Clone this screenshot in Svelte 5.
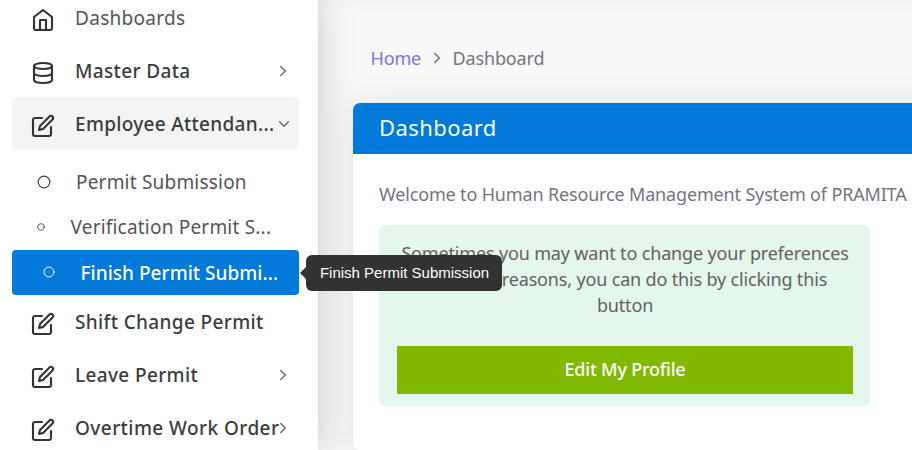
<script>
  const top = [
    { label: 'Dashboards', icon: 'home', light: true },
    { label: 'Master Data', icon: 'database', arrow: 'right' },
    { label: 'Employee Attendan...', icon: 'edit', arrow: 'down', open: true }
  ];
  const sub = [
    { label: 'Permit Submission', kind: 'large' },
    { label: 'Verification Permit S...', kind: 'small' },
    { label: 'Finish Permit Submi...', kind: 'active' }
  ];
  const bottom = [
    { label: 'Shift Change Permit', icon: 'edit' },
    { label: 'Leave Permit', icon: 'edit', arrow: 'right' },
    { label: 'Overtime Work Order', icon: 'edit', arrow: 'right', wide: true }
  ];
</script>

{#snippet row(item)}
  <a class="row" class:open={item.open} class:light={item.light} class:wide={item.wide}>
    <svg class="icon" viewBox="0 0 24 24">
      {#if item.icon === 'home'}
        <path d="M3 9l9-7 9 7v11a2 2 0 0 1-2 2H5a2 2 0 0 1-2-2z" /><path d="M9 22V12h6v10" />
      {:else if item.icon === 'database'}
        <ellipse cx="12" cy="5" rx="9" ry="3" /><path d="M21 12c0 1.66-4 3-9 3s-9-1.34-9-3" /><path d="M3 5v14c0 1.66 4 3 9 3s9-1.34 9-3V5" />
      {:else}
        <path d="M11 4H4a2 2 0 0 0-2 2v14a2 2 0 0 0 2 2h14a2 2 0 0 0 2-2v-7" /><path d="M18.5 2.5a2.121 2.121 0 0 1 3 3L12 15l-4 1 1-4 9.500-9.500z" />
      {/if}
    </svg>
    <span>{item.label}</span>
    {#if item.arrow}
      <svg class="arrow {item.arrow}" viewBox="0 0 24 24"><path d="M9 18l6-6-6-6" /></svg>
    {/if}
  </a>
{/snippet}

<div class="page">
  <nav>
    {#each top as item}{@render row(item)}{/each}
    <div class="submenu">
      {#each sub as item}
        <a class="sub {item.kind}">
          <svg class="dot" viewBox="0 0 24 24"><circle cx="12" cy="12" r="10" /></svg>
          <span>{item.label}</span>
        </a>
      {/each}
    </div>
    {#each bottom as item}{@render row(item)}{/each}
  </nav>

  <main>
    <div class="crumbs">
      <a class="home">Home</a>
      <svg viewBox="0 0 24 24"><path d="M9 18l6-6-6-6" /></svg>
      <span>Dashboard</span>
    </div>
    <section class="card">
      <header>Dashboard</header>
      <div class="body">
        <p class="welcome">Welcome to Human Resource Management System of PRAMITA</p>
        <div class="notice">
          <p>Sometimes you may want to change your preferences<br />for some reasons, you can do this by clicking this<br />button</p>
          <button>Edit My Profile</button>
        </div>
      </div>
    </section>
  </main>

  <div class="tooltip">Finish Permit Submission</div>
</div>

<style>
  :global(body) { overflow: hidden; }
  .page { position: relative; display: flex; width: 912px; height: 450px; overflow: hidden; background: #f8f8f8; font-family: 'Noto Sans', sans-serif; font-size: 18px; color: #76737f; }
  svg { fill: none; stroke: currentColor; stroke-width: 2; stroke-linecap: round; stroke-linejoin: round; flex: none; }
  nav { position: relative; z-index: 1; box-sizing: border-box; width: 318px; height: 450px; flex: none; padding: 0 19px 0 12px; background: #fff; box-shadow: 0 0 36px rgba(15, 25, 22, 0.22); color: #3c3c3c; }
  nav > .row:first-child { margin-top: -9px; }
  .row { box-sizing: border-box; display: flex; align-items: center; height: 53px; padding: 0 7px 0 19px; border-radius: 6px; font-size: 19px; font-weight: 500; letter-spacing: 0.36px; white-space: nowrap; }
  .row span { flex: 1; min-width: 0; line-height: 26px; }
  .row.light { font-weight: 400; color: #555; letter-spacing: 0.3px; }
  .row.wide { letter-spacing: 0.44px; }
  .row.open { background: #f4f4f4; letter-spacing: 0.3px; }
  .icon { width: 24px; height: 24px; margin: 5px 20px 0 0; stroke-width: 2.1; overflow: visible; color: #333; }
  .arrow { width: 18px; height: 18px; color: #6e6b7b; }
  .arrow.down { transform: translateX(1px) rotate(90deg); }
  .submenu { padding-top: 10px; }
  .sub { box-sizing: border-box; display: flex; align-items: center; height: 45px; border-radius: 4px; font-size: 19px; letter-spacing: 0.2px; white-space: nowrap; color: #555; }
  .sub .dot { color: #404040; }
  .large { padding: 0 0 2px 25px; }
  .large .dot { width: 14px; height: 14px; margin-right: 25px; overflow: visible; }
  .small { padding: 0 0 2px 25px; }
  .small .dot { width: 8px; height: 8px; margin-right: 25.500px; stroke-width: 2.5; overflow: visible; }
  .active { padding-left: 31px; background: #0079d9; color: #fff; font-weight: 500; letter-spacing: 0.03px; }
  .active .dot { width: 12px; height: 12px; margin: 0 25.500px 1px 0; color: #fff; }

  main { flex: none; width: 594px; padding-left: 35px; box-sizing: border-box; box-shadow: inset 0 12px 14px -10px rgba(20, 50, 45, 0.05); letter-spacing: -0.16px; }
  .crumbs { display: flex; align-items: center; height: 26px; padding: 45px 0 0 17.500px; }
  .crumbs .home { color: #7c71ef; }
  .crumbs svg { width: 18px; height: 18px; margin: 0 7px 0 6.500px; stroke-width: 2.2; }
  .card { width: 650px; height: 347px; margin-top: 32px; background: #fff; border-radius: 7px; overflow: hidden; box-shadow: 0 4px 36px rgba(15, 35, 30, 0.1); }
  header { box-sizing: border-box; height: 51px; padding-left: 26px; background: #0079d9; color: #fff; font-size: 22px; line-height: 48px; letter-spacing: 0.42px; }
  .body { padding: 27px 0 0 26px; }
  p { margin: 0; line-height: 26px; white-space: nowrap; }
  .notice { box-sizing: border-box; width: 491px; height: 181px; margin-top: 18px; padding: 15px 17px 0 18px; background: #e4f7ec; border-radius: 6px; color: #5f625f; text-align: center; }
  button { display: block; width: 456px; height: 48px; margin-top: 28px; padding: 0 0 2px; border: 0; background: #80b900; color: #fff; font: 500 18px/46px 'Noto Sans', sans-serif; letter-spacing: -0.2px; }
  .tooltip { position: absolute; z-index: 2; left: 306px; top: 255px; box-sizing: border-box; width: 196px; height: 36px; padding-left: 1px; border-radius: 6px; background: #323232; color: #fff; font: 15px/36px 'Liberation Sans', sans-serif; text-align: center; white-space: nowrap; }
  .tooltip::before { content: ''; position: absolute; left: -6px; top: 12px; border: 6px solid transparent; border-right-color: #323232; border-left: 0; }
</style>
